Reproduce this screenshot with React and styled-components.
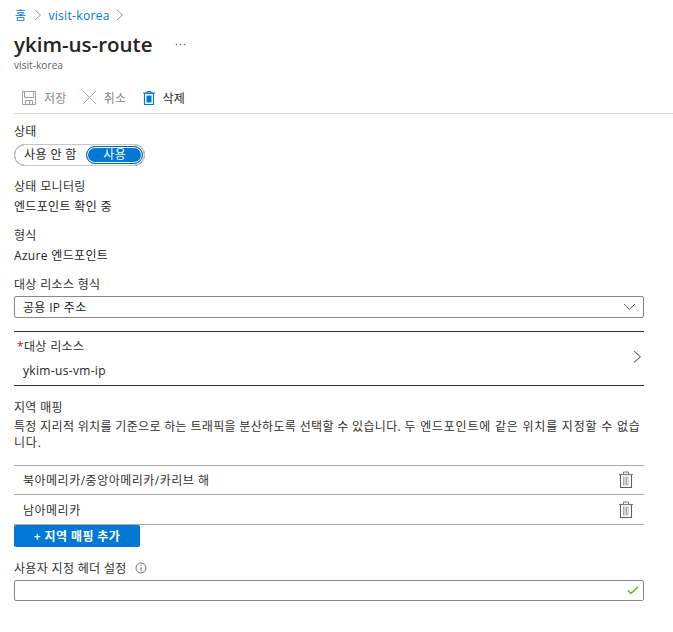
import React from "react";
import styled, { createGlobalStyle } from "styled-components";

const Global = createGlobalStyle`
  html, body { margin: 0; padding: 0; background: #fff; }
  body { font-family: "Open Sans", "Noto Sans CJK KR", sans-serif; font-size: 12px; color: #252423; overflow: hidden; letter-spacing: 0.33px; }
`;

const Page = styled.div`width: 673px; height: 632px; overflow: hidden;`;
const Head = styled.header`padding: 7px 0 0 14px;`;
const Crumbs = styled.nav`display: flex; align-items: center; gap: 6px; height: 16px; color: #0078d4;`;
const Crumb = styled.span`margin: 0 2px 0 1px;`;
const TitleRow = styled.div`display: flex; align-items: center; height: 26px; margin-top: 8px;`;
const Title = styled.h1`margin: 0; font-size: 20.5px; font-weight: 600; line-height: 26px; letter-spacing: 0; color: #252423;`;
const More = styled.span`margin-left: 22px; width: 12px; height: 6px; display: flex; align-items: center;`;
const Sub = styled.div`height: 16px; line-height: 16px; font-size: 10.2px; letter-spacing: 0; color: #605e5c;`;
const Toolbar = styled.div`display: flex; align-items: center; height: 31px; padding-left: 7px; margin-top: 9px;`;
const Tool = styled.div`display: flex; align-items: center; gap: 7px; margin-right: 15px; color: ${p => (p.$off ? "#8a8886" : "#252423")};`;
const Divider = styled.div`height: 1px; background: #d6d6d6; margin-left: 14px;`;
const Form = styled.div`padding-left: 14px; width: 630px;`;
const Label = styled.div`height: 16px; line-height: 16px; margin-top: ${p => p.$top || 0}px; color: #323130;`;
const Value = styled.div`height: 16px; line-height: 16px; margin-top: ${p => p.$top || 4}px; color: #252423;`;
const Toggle = styled.div`box-sizing: border-box; width: 131px; height: 22px; margin-top: 4px; border: 1px solid #7a7a7a; border-radius: 11px; box-shadow: inset 0 0 0 1px #fff; outline: 1px solid #c8c8c8; outline-offset: -1px; display: flex; align-items: center; padding: 0 1px 0 9px;`;
const ToggleOff = styled.span`width: 62px; color: #252423; letter-spacing: 0.4px; white-space: nowrap; line-height: 16px;`;
const ToggleOn = styled.span`box-sizing: border-box; width: 57px; height: 18px; margin-left: 1px; border-radius: 9px; background: #0078d4; border: 1px solid #0063b1; box-shadow: inset 0 0 0 1px #fff; color: #fff; text-align: center; line-height: 15px; letter-spacing: 0.4px;`;
const Select = styled.div`box-sizing: border-box; height: 22px; margin-top: 3px; border: 1px solid #8a8886; border-radius: 2px; display: flex; align-items: center; justify-content: space-between; padding: 0 7px 0 8px; color: #252423;`;
const Picker = styled.div`box-sizing: border-box; height: 55px; margin-top: 13px; border-top: 1px solid #323130; border-bottom: 1px solid #323130; padding: 7px 0 0 3px; display: flex; justify-content: space-between;`;
const PickerText = styled.div`display: flex; flex-direction: column;`;
const Star = styled.span`color: #a4262c;`;
const PickerValue = styled.div`height: 16px; line-height: 16px; margin: 8px 0 0 6px; color: #252423;`;
const Chevron = styled.span`display: flex; align-items: center; height: 30px; margin: 3px 2px 0 0;`;
const Desc = styled.p`margin: 3px 0 0; line-height: 16px; width: 630px; color: #323130; word-break: break-all;`;
const WideSentence = styled.span`letter-spacing: 0.78px;`;
const Rows = styled.div`margin-top: 14px; border-top: 1px solid #a8a8a8;`;
const Row = styled.div`box-sizing: border-box; height: ${p => p.$h}px; border-bottom: 1px solid #a8a8a8; display: flex; align-items: center; justify-content: space-between; padding: 0 10px 0 9px; color: #323130; letter-spacing: 0.5px;`;
const AddBtn = styled.button`display: flex; align-items: center; justify-content: center; width: 126px; height: 22px; margin: 0; padding: 0; border: 0; border-radius: 2px; background: #0078d4; color: #fff; font: 600 12px "Open Sans", "Noto Sans CJK KR", sans-serif; letter-spacing: 0.4px;`;
const HeaderLabel = styled.div`display: flex; align-items: center; gap: 8px; height: 16px; margin-top: 13px; color: #323130;`;
const Input = styled.div`box-sizing: border-box; height: 21px; margin-top: 4px; border: 1px solid #8a8886; border-radius: 2px; display: flex; align-items: center; justify-content: flex-end; padding-right: 4px;`;

const Gt = ({ size = 8, color = "#8a8886" }) => (
  <svg width={size} height={size * 1.5} viewBox="0 0 8 12" fill="none" stroke={color} strokeWidth="0.9"><path d="M1 1l5.5 5L1 11" /></svg>
);
const Save = () => (
  <svg width="16" height="16" viewBox="0 0 16 16" fill="none" stroke="#a19f9d" strokeWidth="1"><path d="M1.5 1.5h13v13h-13z" /><path d="M3.5 1.5v6h9v-6M4.5 14.5v-4h7v4M8.5 11v3" /></svg>
);
const Cross = () => (
  <svg width="15" height="15" viewBox="0 0 16 16" fill="none" stroke="#a19f9d" strokeWidth="1"><path d="M1 1l14 14M15 1L1 15" /></svg>
);
const TrashBlue = () => (
  <svg width="14" height="16" viewBox="0 0 14 16" fill="none"><path d="M1 3h12M5 3V1.5h4V3" stroke="#0078d4" strokeWidth="1" /><path d="M2.5 3.5v11h9v-11z" stroke="#0078d4" strokeWidth="1.2" /><path d="M4.5 5.5h5v7h-5z" fill="#0078d4" /></svg>
);
const TrashGray = () => (
  <svg width="16" height="18" viewBox="0 0 16 18" fill="none"><path d="M1 3.5h14" stroke="#7a7a7a" strokeWidth="1.2" /><path d="M5.5 3V1h5v2" stroke="#7a7a7a" strokeWidth="1" /><path d="M2.5 4v12.5h11V4" stroke="#605e5c" strokeWidth="1.1" /><path d="M5.5 5.5v9M7 5.5v9M8.5 5.5v9M10 5.5v9" stroke="#a8a8a8" strokeWidth="1" /></svg>
);

export default function App() {
  return (
    <Page>
      <Global />
      <Head>
        <Crumbs>
          <Crumb>홈</Crumb>
          <Gt />
          <span>visit-korea</span>
          <Gt />
        </Crumbs>
        <TitleRow>
          <Title>ykim-us-route</Title>
          <More>
            <svg width="11" height="3" viewBox="0 0 11 3" fill="#605e5c"><circle cx="1.5" cy="1.5" r="0.8" /><circle cx="5.5" cy="1.5" r="0.8" /><circle cx="9.5" cy="1.5" r="0.8" /></svg>
          </More>
        </TitleRow>
        <Sub>visit-korea</Sub>
        <Toolbar>
          <Tool $off><Save />저장</Tool>
          <Tool $off><Cross />취소</Tool>
          <Tool><TrashBlue />삭제</Tool>
        </Toolbar>
      </Head>
      <Divider />
      <Form>
        <Label $top={10}>상태</Label>
        <Toggle>
          <ToggleOff>사용 안 함</ToggleOff>
          <ToggleOn>사용</ToggleOn>
        </Toggle>
        <Label $top={13}>상태 모니터링</Label>
        <Value>엔드포인트 확인 중</Value>
        <Label $top={13}>형식</Label>
        <Value>Azure 엔드포인트</Value>
        <Label $top={13}>대상 리소스 형식</Label>
        <Select>
          <span>공용 IP 주소</span>
          <svg width="13" height="8" viewBox="0 0 13 8" fill="none" stroke="#605e5c" strokeWidth="1"><path d="M1 1l5.5 5.5L12 1" /></svg>
        </Select>
        <Picker>
          <PickerText>
            <Label><Star>*</Star>대상 리소스</Label>
            <PickerValue>ykim-us-vm-ip</PickerValue>
          </PickerText>
          <Chevron><Gt size={9} color="#605e5c" /></Chevron>
        </Picker>
        <Label $top={14}>지역 매핑</Label>
        <Desc>특정 지리적 위치를 기준으로 하는 트래픽을 분산하도록 선택할 수 있습니다. <WideSentence>두 엔드포인트에 같은 위치를 지정할 수 없습니다.</WideSentence></Desc>
        <Rows>
          <Row $h={29}><span>북아메리카/중앙아메리카/카리브 해</span><TrashGray /></Row>
          <Row $h={30}><span>남아메리카</span><TrashGray /></Row>
        </Rows>
        <AddBtn>+ 지역 매핑 추가</AddBtn>
        <HeaderLabel>
          <span>사용자 지정 헤더 설정</span>
          <svg width="12" height="12" viewBox="0 0 12 12" fill="none" stroke="#605e5c" strokeWidth="0.9"><circle cx="6" cy="6" r="5" /><path d="M6 5.2v3.6M6 3v1" /></svg>
        </HeaderLabel>
        <Input>
          <svg width="12" height="9" viewBox="0 0 12 9" fill="none" stroke="#57a300" strokeWidth="1.1"><path d="M1 4.5l3 3L11 1" /></svg>
        </Input>
      </Form>
    </Page>
  );
}
